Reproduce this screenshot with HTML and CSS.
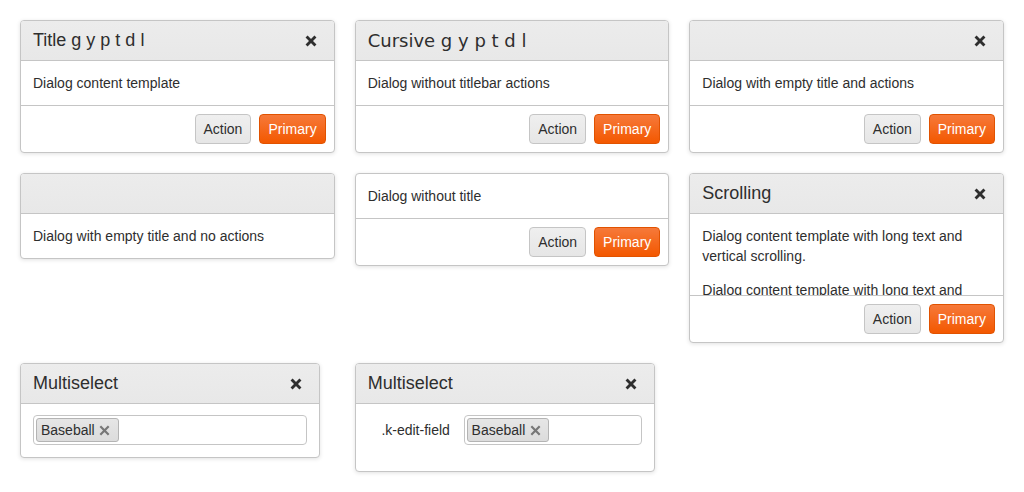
FILE: index.html
```html
<!DOCTYPE html>
<html>
<head>
<meta charset="utf-8">
<link rel="stylesheet" href="styles.css">
</head>
<body>
<div class="grid">
  <div class="dialog">
    <div class="titlebar"><span class="title">Title g y p t d l</span><span class="close"><svg viewBox="0 0 10 10" width="12" height="12"><path d="M1.3 1.3L8.7 8.7M8.7 1.3L1.3 8.7"/></svg></span></div>
    <div class="content">Dialog content template</div>
    <div class="actions"><button class="btn">Action</button><button class="btn primary">Primary</button></div>
  </div>
  <div class="dialog">
    <div class="titlebar"><span class="title cursive">Cursive g y p t d l</span></div>
    <div class="content">Dialog without titlebar actions</div>
    <div class="actions"><button class="btn">Action</button><button class="btn primary">Primary</button></div>
  </div>
  <div class="dialog">
    <div class="titlebar"><span class="title"></span><span class="close"><svg viewBox="0 0 10 10" width="12" height="12"><path d="M1.3 1.3L8.7 8.7M8.7 1.3L1.3 8.7"/></svg></span></div>
    <div class="content">Dialog with empty title and actions</div>
    <div class="actions"><button class="btn">Action</button><button class="btn primary">Primary</button></div>
  </div>

  <div class="dialog">
    <div class="titlebar"><span class="title"></span></div>
    <div class="content">Dialog with empty title and no actions</div>
  </div>
  <div class="dialog">
    <div class="content">Dialog without title</div>
    <div class="actions"><button class="btn">Action</button><button class="btn primary">Primary</button></div>
  </div>
  <div class="dialog">
    <div class="titlebar"><span class="title">Scrolling</span><span class="close"><svg viewBox="0 0 10 10" width="12" height="12"><path d="M1.3 1.3L8.7 8.7M8.7 1.3L1.3 8.7"/></svg></span></div>
    <div class="content scroll">
      <p>Dialog content template with long text and vertical scrolling.</p>
      <p>Dialog content template with long text and vertical scrolling.</p>
      <p>Dialog content template with long text and vertical scrolling.</p>
    </div>
    <div class="actions"><button class="btn">Action</button><button class="btn primary">Primary</button></div>
  </div>

  <div class="dialog narrow">
    <div class="titlebar"><span class="title">Multiselect</span><span class="close"><svg viewBox="0 0 10 10" width="12" height="12"><path d="M1.3 1.3L8.7 8.7M8.7 1.3L1.3 8.7"/></svg></span></div>
    <div class="content ms">
      <div class="multiselect"><span class="chip">Baseball<span class="chip-x"><svg viewBox="0 0 10 10" width="11" height="11"><path d="M1.2 1.2L8.8 8.8M8.8 1.2L1.2 8.8"/></svg></span></span></div>
    </div>
  </div>
  <div class="dialog narrow">
    <div class="titlebar"><span class="title">Multiselect</span><span class="close"><svg viewBox="0 0 10 10" width="12" height="12"><path d="M1.3 1.3L8.7 8.7M8.7 1.3L1.3 8.7"/></svg></span></div>
    <div class="content ms">
      <div class="edit-row">
        <label class="edit-label">.k-edit-field</label>
        <div class="edit-field">
          <div class="multiselect"><span class="chip">Baseball<span class="chip-x"><svg viewBox="0 0 10 10" width="11" height="11"><path d="M1.2 1.2L8.8 8.8M8.8 1.2L1.2 8.8"/></svg></span></span></div>
        </div>
      </div>
    </div>
  </div>
</div>
</body>
</html>
```
FILE: styles.css
```css
* { box-sizing: border-box; }
html, body { margin: 0; padding: 0; background: #fff; }
body {
  font-family: "Liberation Sans", Arial, sans-serif;
  font-size: 14px;
  color: #2e2e2e;
}
.grid {
  display: grid;
  grid-template-columns: repeat(3, 1fr);
  gap: 20px;
  padding: 20px;
  align-items: start;
}
.dialog {
  border: 1px solid #c5c5c5;
  border-radius: 4px;
  background: #fff;
  box-shadow: 0 1px 4px rgba(0,0,0,0.12);
  overflow: hidden;
}
.dialog.narrow { width: 300px; }
.titlebar {
  display: flex;
  align-items: center;
  height: 40px;
  padding: 0 13px 0 12px;
  background: linear-gradient(#ececec, #e8e8e8);
  border-bottom: 1px solid #c5c5c5;
}
.title {
  flex: 1;
  font-size: 18px;
  line-height: 23px;
  white-space: nowrap;
}
.title.cursive { font-family: "DejaVu Sans", sans-serif; }
.close {
  width: 20px;
  height: 20px;
  display: flex;
  align-items: center;
  justify-content: center;
}
.close path { stroke: #2e2e2e; stroke-width: 2.4; fill: none; }
.content {
  padding: 12px;
  line-height: 20px;
}
.content.ms { padding-top: 11px; }
.content.scroll {
  height: 81px;
  overflow: hidden;
}
.content p { margin: 0 0 14px; }
.actions {
  display: flex;
  justify-content: flex-end;
  gap: 8px;
  padding: 8px;
  border-top: 1px solid #c5c5c5;
}
.btn {
  height: 30px;
  padding: 0 8px;
  font-family: "Liberation Sans", Arial, sans-serif;
  font-size: 14px;
  line-height: 28px;
  color: #2e2e2e;
  border: 1px solid #c5c5c5;
  border-radius: 4px;
  background: linear-gradient(#efefef, #e6e6e6);
}
.btn.primary {
  color: #fff;
  border-color: #e15200;
  background: linear-gradient(#f6793a, #f35800);
}
.multiselect {
  height: 30px;
  border: 1px solid #c5c5c5;
  border-radius: 4px;
  padding: 2px;
  display: flex;
  align-items: flex-start;
}
.chip {
  display: inline-flex;
  align-items: center;
  height: 24px;
  line-height: 23px;
  padding: 1px 5px 0 4px;
  border: 1px solid #b4b4b4;
  border-radius: 3px;
  background: linear-gradient(#e6e6e6, #dcdcdc);
}
.chip-x {
  width: 16px;
  height: 16px;
  margin-left: 2px;
  display: flex;
  align-items: center;
  justify-content: center;
}
.chip-x path { stroke: #777; stroke-width: 2; fill: none; }
.edit-row {
  display: flex;
  padding-bottom: 14px;
}
.edit-label {
  width: 30%;
  text-align: right;
  line-height: 30px;
}
.edit-field {
  width: 65%;
  margin-left: auto;
}
```
